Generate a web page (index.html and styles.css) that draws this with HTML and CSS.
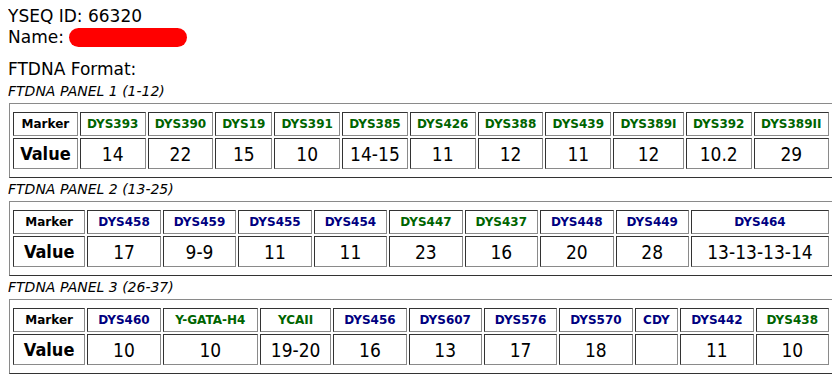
FILE: index.html
```html
<!DOCTYPE html>
<html>
<head>
<meta charset="utf-8">
<link rel="stylesheet" href="styles.css">
</head>
<body>
<div class="info">YSEQ ID: 66320</div>
<div class="info">Name: <span class="redact"></span></div>
<div class="info format">FTDNA Format:</div>

<div class="panel-title">FTDNA PANEL 1 (1-12)</div>
<div class="panel">
<table class="grid">
<tr class="hdr">
<td class="lbl">Marker</td>
<td class="g">DYS393</td><td class="g">DYS390</td><td class="g">DYS19</td><td class="g">DYS391</td><td class="g">DYS385</td><td class="g">DYS426</td><td class="g">DYS388</td><td class="g">DYS439</td><td class="g">DYS389I</td><td class="g">DYS392</td><td class="g">DYS389II</td>
</tr>
<tr class="val">
<td class="lbl">Value</td>
<td>14</td><td>22</td><td>15</td><td>10</td><td>14-15</td><td>11</td><td>12</td><td>11</td><td>12</td><td>10.2</td><td>29</td>
</tr>
</table>
</div>

<div class="panel-title">FTDNA PANEL 2 (13-25)</div>
<div class="panel">
<table class="grid">
<tr class="hdr">
<td class="lbl">Marker</td>
<td class="b">DYS458</td><td class="b">DYS459</td><td class="b">DYS455</td><td class="b">DYS454</td><td class="g">DYS447</td><td class="g">DYS437</td><td class="b">DYS448</td><td class="b">DYS449</td><td class="b">DYS464</td>
</tr>
<tr class="val">
<td class="lbl">Value</td>
<td>17</td><td>9-9</td><td>11</td><td>11</td><td>23</td><td>16</td><td>20</td><td>28</td><td>13-13-13-14</td>
</tr>
</table>
</div>

<div class="panel-title">FTDNA PANEL 3 (26-37)</div>
<div class="panel">
<table class="grid">
<tr class="hdr">
<td class="lbl">Marker</td>
<td class="b">DYS460</td><td class="g">Y-GATA-H4</td><td class="g">YCAII</td><td class="b">DYS456</td><td class="b">DYS607</td><td class="b">DYS576</td><td class="b">DYS570</td><td class="b">CDY</td><td class="b">DYS442</td><td class="g">DYS438</td>
</tr>
<tr class="val">
<td class="lbl">Value</td>
<td>10</td><td>10</td><td>19-20</td><td>16</td><td>13</td><td>17</td><td>18</td><td></td><td>11</td><td>10</td>
</tr>
</table>
</div>
</body>
</html>
```
FILE: styles.css
```css
body {
  margin: 6px 8px 8px 8px;
  font-family: "DejaVu Sans", sans-serif;
  color: #000;
  background: #fff;
}
.info {
  font-size: 17px;
  line-height: 21px;
}
.format {
  margin-top: 11px;
}
.redact {
  display: inline-block;
  width: 118px;
  height: 19px;
  border-radius: 10px;
  background: #ff0000;
  vertical-align: -4px;
}
.panel-title {
  font-size: 14px;
  font-style: italic;
  line-height: 18px;
  margin-top: 2px;
  margin-bottom: 3px;
}
.panel {
  border: 1px solid;
  border-color: #8a8a8a #333 #333 #8a8a8a;
  padding: 6px 1px 6px 1px;
  margin-left: 1px;
  margin-right: -1px;
}
.grid {
  width: 100%;
  border-collapse: separate;
  border-spacing: 2px;
}
.grid td {
  border: 1px solid;
  border-color: #333 #8a8a8a #8a8a8a #333;
  text-align: center;
  padding: 0 4px;
}
.hdr td {
  font-size: 12px;
  font-weight: bold;
  height: 22px;
}
.val td {
  font-family: "DejaVu Sans Condensed", "DejaVu Sans", sans-serif;
  font-stretch: condensed;
  font-size: 19px;
  height: 29px;
}
.val td.lbl {
  font-size: 18px;
  font-weight: bold;
}
.g { color: #006400; }
.b { color: #000080; }
```
